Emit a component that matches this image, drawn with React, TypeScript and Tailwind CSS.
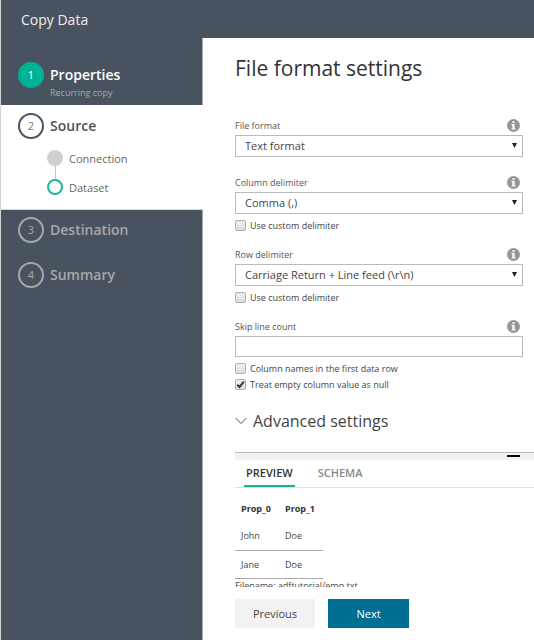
import { useState, type ReactNode } from "react";

function InfoIcon() {
  return (
    <svg viewBox="0 0 13 13" className="size-[13px]" aria-hidden="true">
      <circle cx="6.5" cy="6.5" r="6.5" fill="#969696" />
      <path d="M5.4 2.2h2.2v1.8H5.4zM4.6 5h3v4.4h.9v1.2H4.5V9.4h.9V6.2h-.8z" fill="#fff" />
    </svg>
  );
}

function FieldHeader({ id, label }: { id: string; label: string }) {
  return (
    <div className="mb-[3px] flex h-[13px] items-center justify-between pr-[3px]">
      <label htmlFor={id} className="text-[9px] leading-[13px] text-[#555]">
        {label}
      </label>
      <InfoIcon />
    </div>
  );
}

function SelectField({ id, label, value }: { id: string; label: string; value: string }) {
  return (
    <div>
      <FieldHeader id={id} label={label} />
      <div className="relative">
        <select
          id={id}
          className="block h-[22px] w-full appearance-none border border-[#bababa] bg-white pr-5 pl-[9px] text-[11px] leading-[20px] text-[#444]"
        >
          <option>{value}</option>
        </select>
        <svg viewBox="0 0 5 5" className="pointer-events-none absolute top-2 right-[6px] size-[5px]" aria-hidden="true">
          <path d="M0 0h5L2.5 5z" fill="#222" />
        </svg>
      </div>
    </div>
  );
}

function CheckRow({ label, checked = false }: { label: string; checked?: boolean }) {
  const [on, setOn] = useState(checked);
  return (
    <label className="flex h-4 items-center gap-1 text-[9px] leading-4 text-[#444]">
      <span className="relative size-[11px]">
        <input
          type="checkbox"
          checked={on}
          onChange={() => setOn(!on)}
          className="block size-[11px] appearance-none rounded-[2px] border border-[#b0b0b0] bg-linear-to-b from-[#f0f0f0] to-[#dcdcdc]"
        />
        {on && (
          <svg viewBox="0 0 11 11" className="pointer-events-none absolute inset-0 size-[11px]" aria-hidden="true">
            <path d="M2.3 5.8 4.5 8 8.8 2.6" fill="none" stroke="#333" strokeWidth="2" />
          </svg>
        )}
      </span>
      <span className="pt-px">{label}</span>
    </label>
  );
}

function Step({ n, title, circle, text, children }: { n: number; title: string; circle: string; text: string; children?: ReactNode }) {
  return (
    <div className="flex gap-[6px] pl-[17px]">
      <span className={`flex size-[26px] shrink-0 items-center justify-center rounded-full border-2 text-[11px] ${circle}`}>{n}</span>
      <div>
        <h2 className={`text-[14px] leading-[26px] font-semibold ${text}`}>{title}</h2>
        {children}
      </div>
    </div>
  );
}

export default function App() {
  return (
    <div className="flex min-h-screen flex-col border-l border-[#d4d4d4] bg-white font-['Open_Sans','Noto_Sans',sans-serif]">
      <header className="flex h-[38px] items-center bg-[#49535f] pl-5">
        <h1 className="text-[14px] text-[#eee]">Copy Data</h1>
      </header>
      <div className="flex grow">
        <nav className="w-[202px] shrink-0 border-r border-[#a4a9af] bg-[#49535f]">
          <div className="h-[67px] pt-6">
            <Step n={1} title="Properties" circle="border-[#00b294] bg-[#00b294] text-white" text="text-white">
              <p className="text-[9px] leading-[10px] text-[#a6a8ab]">Recurring copy</p>
            </Step>
          </div>
          <div className="-mr-px h-[105px] border-b border-[#d8d8d8] bg-white pt-2">
            <Step n={2} title="Source" circle="border-[#49535f] text-[#777]" text="text-[#49535f]" />
            <ol className="mt-[11px] ml-[46px] text-[11px] leading-[18px] text-[#666]">
              <li className="flex h-[29px] gap-[6px]">
                <span className="flex w-4 flex-col items-center">
                  <span className="size-4 rounded-full bg-[#d0d0d0]" />
                  <span className="h-[13px] w-px bg-[#c4c4c4]" />
                </span>
                Connection
              </li>
              <li className="flex gap-[6px]">
                <span className="size-4 rounded-full border-2 border-[#1cb89c]" />
                Dataset
              </li>
            </ol>
          </div>
          <div className="flex flex-col gap-[19px] pt-[7px]">
            <Step n={3} title="Destination" circle="border-[#a6a8ab] text-[#a6a8ab]" text="text-[#a6a8ab]" />
            <Step n={4} title="Summary" circle="border-[#a6a8ab] text-[#a6a8ab]" text="text-[#a6a8ab]" />
          </div>
        </nav>
        <main className="min-w-0 grow pl-8">
          <h2 className="pt-3 text-[21px] leading-9 text-[#333]">File format settings</h2>
          <form className="mt-[33px] flex flex-col pr-[11px]">
            <SelectField id="format" label="File format" value="Text format" />
            <div className="mt-[19px]">
              <SelectField id="column" label="Column delimiter" value="Comma (,)" />
              <div className="mt-[3px]">
                <CheckRow label="Use custom delimiter" />
              </div>
            </div>
            <div className="mt-[15px]">
              <SelectField id="row" label="Row delimiter" value="Carriage Return + Line feed (\r\n)" />
              <div className="mt-[3px]">
                <CheckRow label="Use custom delimiter" />
              </div>
            </div>
            <div className="mt-[15px]">
              <FieldHeader id="skip" label="Skip line count" />
              <input id="skip" type="text" className="block h-[21px] w-full border border-[#bababa] px-[9px] text-[11px]" />
              <div className="mt-[3px]">
                <CheckRow label="Column names in the first data row" />
                <CheckRow label="Treat empty column value as null" checked />
              </div>
            </div>
          </form>
          <button type="button" className="mt-[17px] flex h-6 items-center gap-[6px] text-[16px] text-[#444]">
            <svg viewBox="0 0 12 8" className="h-2 w-3" aria-hidden="true">
              <path d="M.7 1 6 6.5 11.3 1" fill="none" stroke="#555" />
            </svg>
            Advanced settings
          </button>
          <section className="mt-[19px] h-[135px] overflow-hidden">
            <div className="flex h-2 items-start justify-end border-t border-[#bbb] bg-[#f2f2f2] pt-[2px] pr-[14px]">
              <span className="h-[2px] w-[13px] bg-black" />
            </div>
            <div role="tablist" className="flex h-7 gap-[13px] border-b border-[#e0e0e0] pl-[9px] text-[11px] font-semibold">
              <button type="button" role="tab" aria-selected="true" className="border-b-2 border-[#1cb294] px-[2px] pt-px text-[#333]">
                PREVIEW
              </button>
              <button type="button" role="tab" aria-selected="false" className="border-b-2 border-transparent px-[10px] pt-px text-[#888]">
                SCHEMA
              </button>
            </div>
            <table className="mt-[6px] w-[88px] text-left text-[9px] leading-[15px] text-[#444]">
              <thead>
                <tr className="h-7 text-[#333]">
                  <th className="w-11 pl-[6px]">Prop_0</th>
                  <th className="w-11 pl-[6px]">Prop_1</th>
                </tr>
              </thead>
              <tbody>
                <tr className="h-7 border-b border-[#aaa]">
                  <td className="pl-[6px]">John</td>
                  <td className="pl-[6px]">Doe</td>
                </tr>
                <tr className="h-7 border-b border-[#aaa]">
                  <td className="pl-[6px]">Jane</td>
                  <td className="pl-[6px]">Doe</td>
                </tr>
              </tbody>
            </table>
            <p className="text-[9px] leading-[14px] text-[#444]">Filename: adftutorial/emp.txt</p>
          </section>
          <div className="flex gap-[13px] pt-3 pb-3 text-[11px]">
            <button type="button" className="h-[29px] w-20 bg-[#f2f2f2] pt-px text-[#444]">
              Previous
            </button>
            <button type="button" className="h-[29px] w-[81px] bg-[#006f94] pt-px text-white">
              Next
            </button>
          </div>
        </main>
      </div>
    </div>
  );
}
